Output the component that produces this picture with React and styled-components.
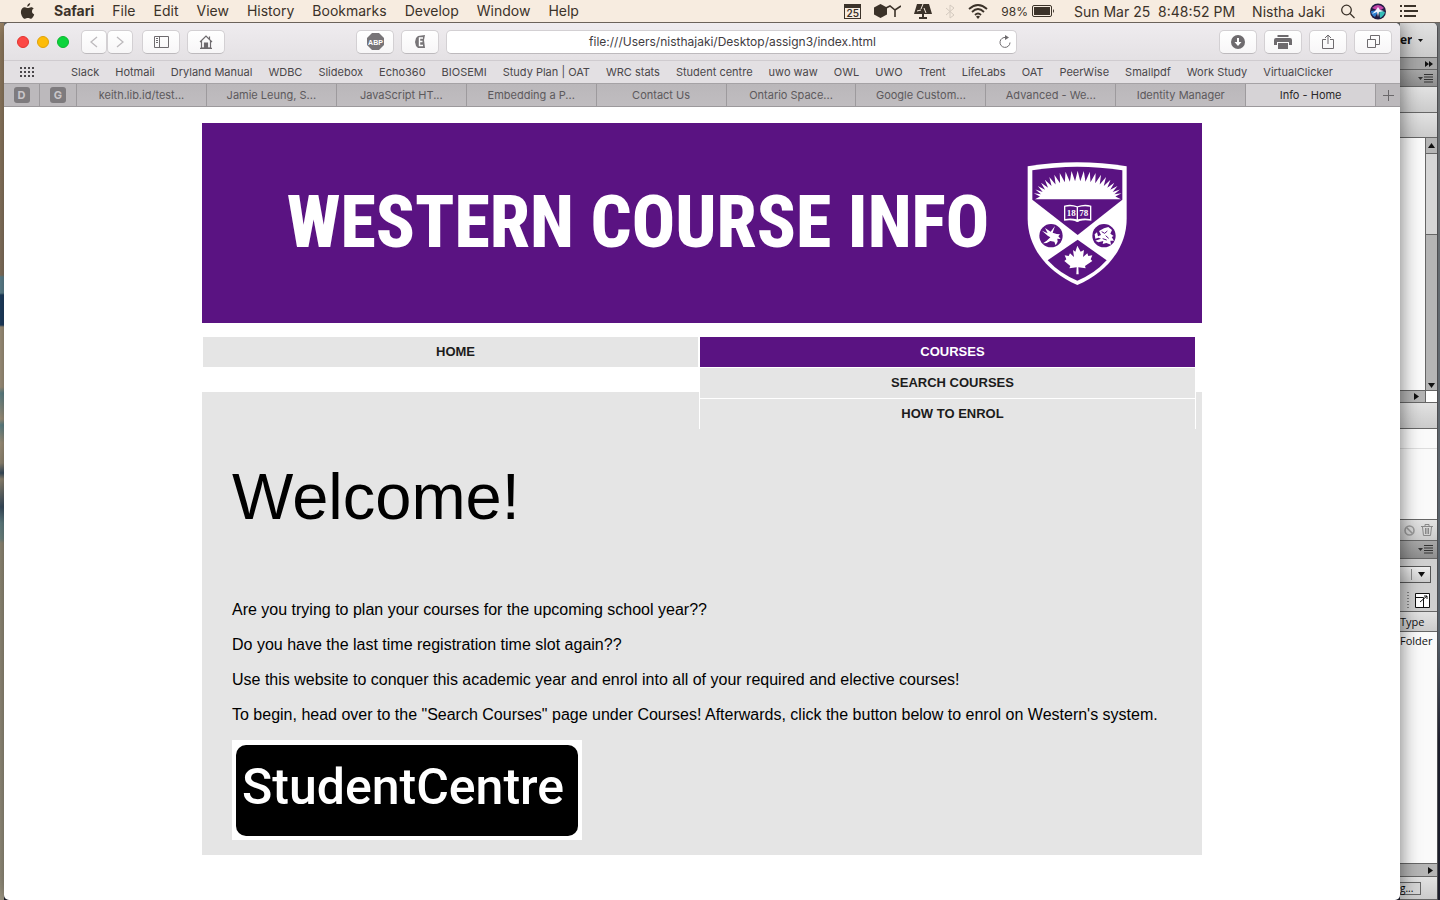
import React from 'react';
import styled, { createGlobalStyle } from 'styled-components';

const GlobalStyle = createGlobalStyle`
  * {
    box-sizing: border-box;
  }
  body {
    margin: 0;
    font-family: Inter, 'Liberation Sans', sans-serif;
  }
  ul, p, h1, h2 {
    margin: 0;
    padding: 0;
  }
  ul {
    list-style: none;
  }
  button {
    font-family: inherit;
    margin: 0;
    padding: 0;
  }
  svg {
    display: block;
    flex: none;
  }
`;

const Screen = styled.div`
  display: flex;
  flex-direction: column;
  min-height: 100vh;
  overflow: hidden;
`;

/* ---------- mac menu bar ---------- */

const MenuBar = styled.header`
  position: relative;
  z-index: 2;
  display: flex;
  align-items: center;
  justify-content: space-between;
  height: 23px;
  padding: 0 22px 0 20px;
  background: #f7ece0;
  border-bottom: 1px solid #6b625a;
  color: #3b3229;
  font-size: 14px;
  white-space: nowrap;
`;

const MenuGroup = styled.div`
  display: flex;
  align-items: center;
  gap: ${props => props.$gap}px;
`;

const MenuItem = styled.button`
  border: 0;
  background: none;
  color: inherit;
  font-size: 14px;
  line-height: 20px;
  font-weight: ${props => (props.$bold ? 700 : 400)};
`;

const CalendarIcon = styled.span`
  width: 17px;
  height: 15px;
  border: 1px solid #3b3229;
  border-top-width: 4px;
  font-size: 10px;
  font-weight: 600;
  line-height: 10px;
  text-align: center;
`;

const Battery = styled.span`
  display: flex;
  align-items: center;
  gap: 4px;
  font-size: 12px;
`;

const Clock = styled.span`
  padding: 0 4px 0 6px;
  white-space: pre;
`;

const UserName = styled.span`
  padding-right: 2px;
`;

/* ---------- desktop and windows ---------- */

const Desktop = styled.div`
  flex: 1;
  display: grid;
  grid-template-columns: 4px minmax(0, 1fr) 38px;
  padding-right: 2px;
  background: linear-gradient(#6f7274, #55606a 70%, #1c1d2b 82%);
`;

const Wallpaper = styled.div`
  background: linear-gradient(
    #a58c6c 0, #94806a 252px, #6a93a0 254px, #6a93a0 270px, #22466c 272px,
    #22466c 302px, #b5a68c 304px, #b5a68c 364px, #6b9499 370px, #b5a68c 396px,
    #6b9499 402px, #b5a68c 420px, #a49982 440px, #40566a 450px, #a49982 456px,
    #40566a 484px, #6d8f93 500px, #7d9792 516px, #a29a84 520px, #a69f8b 100%
  );
`;

const Browser = styled.main`
  position: relative;
  z-index: 1;
  display: flex;
  flex-direction: column;
  background: #fff;
  border-radius: 5px;
  overflow: hidden;
  box-shadow: 0 0 20px rgba(0, 0, 0, 0.55);
`;

const Toolbar = styled.div`
  display: flex;
  align-items: center;
  height: 38px;
  background: linear-gradient(#efecef, #e4e1e4);
  border-bottom: 1px solid #cfcbcf;
`;

const ToolbarLeft = styled.div`
  display: flex;
  align-items: center;
  width: 352px;
  padding-left: 13px;
`;

const ToolbarRight = styled.div`
  display: flex;
  justify-content: flex-end;
  gap: 7px;
  width: 383px;
  padding-right: 8px;
`;

const AddressArea = styled.div`
  flex: 1;
  display: flex;
  gap: 7px;
  min-width: 0;
`;

const Lights = styled.div`
  display: flex;
  gap: 8px;
  width: 64px;
`;

const Light = styled.button`
  width: 12px;
  height: 12px;
  border: 1px solid ${props => props.$edge};
  border-radius: 50%;
  background: ${props => props.$fill};
`;

const ToolButton = styled.button`
  display: flex;
  align-items: center;
  justify-content: center;
  width: ${props => (props.$narrow ? 26 : 38)}px;
  height: 24px;
  border: 1px solid #d3d0d3;
  border-bottom-color: #bdbabd;
  border-radius: 5px;
  background: linear-gradient(#fff, #f7f6f7);
  color: #6e6b6e;
`;

const ButtonSet = styled.div`
  display: flex;
  margin-right: ${props => props.$after}px;
`;

const AddressBar = styled.form`
  flex: 1;
  display: flex;
  align-items: center;
  min-width: 0;
  height: 24px;
  padding: 0 4px 0 20px;
  border: 1px solid #d3d0d3;
  border-bottom-color: #bdbabd;
  border-radius: 5px;
  background: #fff;
`;

const AddressInput = styled.input`
  flex: 1;
  min-width: 0;
  border: 0;
  padding: 0;
  background: none;
  color: #3f3c3f;
  font-family: Inter, sans-serif;
  font-size: 12px;
  text-align: center;
  outline: 0;
`;

const PlainButton = styled.button`
  display: flex;
  border: 0;
  background: none;
  color: #6e6b6e;
`;

const BookmarkBar = styled.nav`
  display: flex;
  align-items: center;
  gap: 16px;
  height: 22px;
  padding-left: 16px;
  background: #e3e0e3;
  font-size: 11px;
  white-space: nowrap;
`;

const GridButton = styled(PlainButton)`
  margin-right: 20px;
`;

const Bookmark = styled.a`
  color: #4a474a;
  text-decoration: none;
`;

const TabBar = styled.div`
  display: flex;
  height: 24px;
  background: #bcb9bc;
  border-top: 1px solid #a5a2a5;
  border-bottom: 1px solid #9c999c;
`;

const Tab = styled.button`
  flex: 1;
  border: 0;
  border-left: 1px solid #9d9a9d;
  background: ${props => (props.$active ? '#d6d3d6' : 'linear-gradient(#bab7ba, #c0bdc0)')};
  color: ${props => (props.$active ? '#2a282a' : '#5c595c')};
  font-size: 11px;
`;

const PinnedTab = styled.button`
  display: flex;
  align-items: center;
  justify-content: center;
  width: 36px;
  border: 0;
  border-right: ${props => (props.$last ? 0 : '1px solid #9d9a9d')};
  background: none;
`;

const PinLetter = styled.span`
  width: 16px;
  height: 16px;
  border-radius: 3px;
  background: #7e7b7e;
  color: #c9c6c9;
  font-size: 11px;
  font-weight: 700;
  line-height: 16px;
`;

const NewTab = styled.button`
  display: flex;
  align-items: center;
  justify-content: center;
  width: 25px;
  border: 0;
  border-left: 1px solid #9d9a9d;
  background: none;
  color: #6a676a;
`;

/* ---------- the web page ---------- */

const Page = styled.div`
  width: 100%;
  max-width: 1000px;
  margin: 0 auto;
  padding: 16px 0 45px;
  font-family: 'Liberation Sans', Arial, sans-serif;
`;

const Banner = styled.div`
  display: flex;
  align-items: center;
  justify-content: center;
  gap: 24px;
  height: 200px;
  padding-left: 26px;
  background: #5a1382;
`;

const BannerTitle = styled.h1`
  color: #fff;
  font-family: 'Roboto Condensed', 'Liberation Sans Narrow', 'Liberation Sans', sans-serif;
  font-size: 72px;
  font-weight: 800;
  line-height: 80px;
  white-space: nowrap;
`;

const SiteNav = styled.ul`
  display: grid;
  grid-template-columns: 1fr 1fr;
  padding: 13px 6px 24px 0;
`;

const NavItem = styled.li`
  position: relative;
`;

const NavLink = styled.a`
  display: block;
  padding-left: 10px;
  border: 1px solid #fff;
  border-bottom-width: ${props => (props.$sub ? 0 : 1)}px;
  background: ${props => (props.$active ? '#5a1382' : '#e5e5e5')};
  color: ${props => (props.$active ? '#fff' : '#1c1c1c')};
  font-size: 13px;
  font-weight: 700;
  line-height: 30px;
  text-align: center;
  text-decoration: none;
  text-transform: uppercase;
`;

const SubMenu = styled.ul`
  position: absolute;
  top: 31px;
  left: 0;
  right: 0;
`;

const Content = styled.section`
  padding: 68px 30px 15px;
  background: #e5e5e5;
  color: #000;
`;

const Heading = styled.h2`
  margin-bottom: 66px;
  font-size: 65px;
  font-weight: 400;
  line-height: 74px;
`;

const Copy = styled.div`
  display: grid;
  gap: 15px;
  justify-items: start;
  font-size: 16px;
  line-height: 20px;
`;

const StudentCentre = styled.a`
  display: block;
  width: 350px;
  padding: 5px 4px 4px;
  background: #fff;
  text-decoration: none;
`;

const StudentCentreLabel = styled.span`
  display: block;
  height: 91px;
  padding-left: 6px;
  border-radius: 10px;
  background: #000;
  color: #fff;
  font-family: Roboto, sans-serif;
  font-size: 50px;
  font-weight: 500;
  line-height: 84px;
`;

/* ---------- window behind the browser ---------- */

const SidePanel = styled.aside`
  display: flex;
  flex-direction: column;
  overflow: hidden;
  border-right: 1px solid #4d4d50;
  border-top-right-radius: 5px;
  background: #cfcfcf;
  color: #222;
  font-family: 'Open Sans', sans-serif;
  font-size: 11px;
`;

const PanelRow = styled.div`
  display: flex;
  align-items: center;
  justify-content: ${props => props.$align || 'flex-end'};
  gap: 6px;
  height: ${props => props.$h}px;
  padding-right: ${props => props.$pad || 0}px;
  border-bottom: 1px solid ${props => (props.$open ? 'transparent' : '#666')};
  background: ${props => props.$bg || 'linear-gradient(#e2e2e2, #cbcbcb)'};
`;

const PanelList = styled.div`
  display: flex;
  justify-content: flex-end;
  ${props => (props.$h ? `height: ${props.$h}px;` : 'flex: 1;')}
  border-bottom: 1px solid #666;
  background: #fafafa;
`;

const PanelLine = styled.div`
  width: 100%;
  height: 20px;
  border-bottom: 1px solid #ddd;
`;

const ScrollTrack = styled.div`
  display: flex;
  flex-direction: column;
  justify-content: space-between;
  width: 12px;
  padding-bottom: 2px;
  border-left: 1px solid #666;
  background: #b5b5b5;
`;

const ScrollThumb = styled.div`
  height: 97px;
  padding-top: 5px;
  border-bottom: 1px solid #666;
  background: linear-gradient(#b5b5b5 15px, #666 15px, #666 16px, #d6d6d6 16px);
`;

const ScrollCorner = styled.span`
  align-self: stretch;
  width: 12px;
  border-left: 1px solid #666;
  background: #fff;
`;

const PanelText = styled.span`
  flex: 1;
  overflow: hidden;
  color: #111;
  white-space: nowrap;
  font-size: ${props => props.$size || 11}px;
  font-weight: ${props => (props.$bold ? 700 : 400)};
  line-height: 18px;
`;

const PanelSelect = styled.button`
  display: flex;
  align-items: center;
  justify-content: flex-end;
  gap: 5px;
  width: 32px;
  height: 17px;
  padding-right: 5px;
  border: 1px solid #555;
  border-left: 0;
  background: linear-gradient(#eee, #ccc);
`;

const PanelButton = styled.button`
  width: 21px;
  height: 13px;
  border: 1px solid #666;
  border-left: 0;
  background: #d5d5d5;
  font-size: 10px;
  line-height: 9px;
  text-align: left;
`;

const bookmarks = [
  'Slack', 'Hotmail', 'Dryland Manual', 'WDBC', 'Slidebox', 'Echo360', 'BIOSEMI',
  'Study Plan | OAT', 'WRC stats', 'Student centre', 'uwo waw', 'OWL', 'UWO', 'Trent',
  'LifeLabs', 'OAT', 'PeerWise', 'Smallpdf', 'Work Study', 'VirtualClicker'
];

const tabs = [
  'keith.lib.id/test...', 'Jamie Leung, S...', 'JavaScript HT...', 'Embedding a P...',
  'Contact Us', 'Ontario Space...', 'Google Custom...', 'Advanced - We...',
  'Identity Manager', 'Info - Home'
];

const menus = ['File', 'Edit', 'View', 'History', 'Bookmarks', 'Develop', 'Window', 'Help'];

// zig-zag between an outer and an inner ellipse, closed along the horizon
function sunburst() {
  var points = [];
  var rays = 21;
  for (var i = 0; i <= rays * 2; i++) {
    var angle = Math.PI * (0.04 + 0.92 * (i / (rays * 2)));
    var tip = i % 2 === 1;
    var x = 194 - Math.cos(angle) * (tip ? 134 : 114);
    var y = 143 - Math.sin(angle) * (tip ? 84 : 52);
    points.push(x.toFixed(1) + ',' + y.toFixed(1));
  }
  return 'M66,145 L' + points.join(' L') + ' L324,145 Z';
}

const Shield = () => (
  <svg width="130" height="145" viewBox="0 0 390 435" aria-label="Western crest">
    <path fill="#fff" d="M44 46Q192 22 341 46V203C341 290 282 364 193 402C104 364 44 290 44 203Z" />
    <path fill="#5a1382" d="M58 58Q192 36 328 58V146L194 252L58 146Z" />
    <path fill="#fff" d={sunburst()} />
    <path fill="#5a1382" d="M194 266L281 328Q244 369 193 389Q142 369 104 328Z" />
    <path fill="#fff" d="M153 164Q175 158 193 166Q213 158 235 164V209Q213 206 200 210Q193 216 186 210Q173 206 153 209Z" />
    <path fill="#5a1382" d="M157 167Q176 163 191 169V205Q174 201 157 204ZM195 169Q213 163 231 167V204Q213 201 195 205Z" />
    <g fill="#fff" fontFamily="Liberation Serif, serif" fontWeight="700" fontSize="27">
      <text x="161" y="194">18</text>
      <text x="199" y="194">78</text>
    </g>
    <circle cx="114" cy="254" r="35" fill="#5a1382" />
    <circle cx="273" cy="254" r="35" fill="#5a1382" />
    <path fill="#fff" d="M87 239L104 247L96 231L113 242L126 225L119 245L131 249L141 250L136 256L143 264L133 263L134 272L128 283L124 272L112 270L101 276L90 277L101 269L112 259L104 254Z" />
    <path fill="#fff" d="M245 250L252 244L255 256L264 252L258 240L273 232L286 228L297 237L292 248L302 255L296 258L303 269L292 269L294 281L280 276L269 279L271 270L256 274L247 269L264 263L257 260L247 263Z" />
    <path fill="none" stroke="#5a1382" strokeWidth="3" d="M266 242L275 247L283 240M278 254L287 262M269 263L281 267" />
    <path fill="#fff" d="M193 284L203 302L213 297L210 318L223 307L226 315L238 313L233 325L238 330L216 345L218 352L196 349L197 370H190L191 349L169 352L172 345L154 330L160 325L155 313L167 315L171 307L183 318L180 297L187 302Z" />
  </svg>
);

const Tri = ({ d, w = 8, h = 8 }) => (
  <svg width={w} height={h} viewBox={'0 0 ' + w + ' ' + h} fill="#111"><path d={d} /></svg>
);

const PanelMenuIcon = () => (
  <svg width="15" height="9" viewBox="0 0 15 9" fill="#333">
    <path d="M0 3h5L2.500 6zM6 0h9v1H6zM6 2.500h9v1H6zM6 5h9v1H6zM6 7.500h9v1H6z" />
  </svg>
);

class App extends React.Component {
  constructor(props) {
    super(props)

    this.state = {
      url: 'file:///Users/nisthajaki/Desktop/assign3/index.html',
      activeTab: 9
    }
  }

  onUrlChange(e) {
    this.setState({
      url: e.target.value
    })
  }

  selectTab(index) {
    this.setState({
      activeTab: index
    })
  }

  renderMenuBar() {
    return (
      <MenuBar>
        <MenuGroup $gap={18}>
          <svg width="16" height="17" viewBox="0 0 16 17" fill="#3b3229">
            <path d="M10.200 0C10.300 1.800 8.800 3.700 7.200 3.700C7 2 8.600.3 10.200 0ZM13.700 5.600C11.300 7 11.500 10.300 14.200 11.500C13.600 13.300 12.200 15.800 10.700 15.800C9.500 15.800 9.200 15.100 7.900 15.100C6.500 15.100 6.100 15.800 5 15.800C3 15.800.9 12 .9 9C.9 6 2.800 4.300 4.800 4.300C6.100 4.300 7 5.100 7.900 5.100C8.700 5.100 9.700 4.200 11.200 4.200C12.200 4.200 13.200 4.800 13.700 5.600Z" />
          </svg>
          <MenuItem $bold>Safari</MenuItem>
          {menus.map(name => <MenuItem key={name}>{name}</MenuItem>)}
        </MenuGroup>
        <MenuGroup $gap={13}>
          <CalendarIcon>25</CalendarIcon>
          <svg width="27" height="14" viewBox="0 0 27 14">
            <path fill="#3b3229" d="M6.500 0L13 3.500V10.500L6.500 14L0 10.500V3.500Z" />
            <path fill="none" stroke="#3b3229" strokeWidth="1.600" d="M12 4L16 2L21 6L27 2M21 6V13" />
          </svg>
          <svg width="18" height="15" viewBox="0 0 18 15" fill="#3b3229">
            <path d="M3 0H15L18 10H10V13H13V15H5V13H8V10H0Z" />
            <path fill="none" stroke="#f7ece0" d="M9 0L7 5M10 4L12 9M3 7L7 6" />
          </svg>
          <svg width="10" height="15" viewBox="0 0 10 15" fill="none" stroke="#d4cabf">
            <path d="M1 4L9 11L5 14V1L9 4L1 11" />
          </svg>
          <svg width="20" height="15" viewBox="0 0 20 15" fill="none" stroke="#3b3229" strokeWidth="1.800">
            <path d="M1 5Q10-3 19 5M4 8Q10 2 16 8M7 11Q10 8 13 11" />
            <path fill="#3b3229" stroke="none" d="M8 12.500Q10 11 12 12.500L10 15Z" />
          </svg>
          <Battery>
            98%
            <svg width="23" height="12" viewBox="0 0 23 12" fill="#3b3229">
              <rect x=".5" y=".5" width="19" height="11" rx="1.500" fill="none" stroke="#3b3229" />
              <path d="M2 2H18V10H2ZM21 4Q23 6 21 8Z" />
            </svg>
          </Battery>
          <Clock>Sun Mar 25  8:48:52 PM</Clock>
          <UserName>Nistha Jaki</UserName>
          <svg width="16" height="15" viewBox="0 0 16 15" fill="none" stroke="#3b3229" strokeWidth="1.300">
            <circle cx="6.500" cy="6" r="4.800" />
            <path d="M10 9.500L14.500 14" />
          </svg>
          <svg width="18" height="17" viewBox="0 0 18 17">
            <circle cx="9" cy="8.500" r="8" fill="#211b42" />
            <path d="M3 5Q9-1 15 5L10 8Z" fill="#c445a8" />
            <path d="M2 8L10 7L6 14Q2 12 2 8Z" fill="#2f7fd0" />
            <path d="M10 7L16 9Q15 13 11 15Z" fill="#35bdb9" />
            <path d="M9 4L11 7L15 8L10 9L9 14L8 9L3 11L7 7Z" fill="#f2f4ff" />
          </svg>
          <svg width="18" height="12" viewBox="0 0 18 12" fill="#3b3229">
            <path d="M0 0h2v2H0zM4 0h12v2H4zM0 5h2v2H0zM4 5h14v2H4zM0 10h2v2H0zM4 10h12v2H4z" />
          </svg>
        </MenuGroup>
      </MenuBar>
    );
  }

  renderToolbar() {
    return (
      <Toolbar>
        <ToolbarLeft>
          <Lights>
            <Light aria-label="Close" $fill="#fc4845" $edge="#e2332f" />
            <Light aria-label="Minimise" $fill="#fdbc09" $edge="#e0a209" />
            <Light aria-label="Zoom" $fill="#0bd43b" $edge="#0cb52f" />
          </Lights>
          <ButtonSet $after={9}>
            <ToolButton $narrow aria-label="Back">
              <svg width="8" height="12" viewBox="0 0 8 12" fill="none" stroke="#bdbabd" strokeWidth="1.300"><path d="M7 1L1 6L7 11" /></svg>
            </ToolButton>
            <ToolButton $narrow aria-label="Forward">
              <svg width="8" height="12" viewBox="0 0 8 12" fill="none" stroke="#bdbabd" strokeWidth="1.300"><path d="M1 1L7 6L1 11" /></svg>
            </ToolButton>
          </ButtonSet>
          <ButtonSet $after={7}>
            <ToolButton aria-label="Sidebar">
              <svg width="15" height="12" viewBox="0 0 15 12" fill="none" stroke="currentColor">
                <path d="M.5.5H14.500V11.500H.5ZM5.500.5V11.500M2 2.500H4M2 4.500H4M2 6.500H4" />
              </svg>
            </ToolButton>
          </ButtonSet>
          <ToolButton aria-label="Home">
            <svg width="14" height="14" viewBox="0 0 14 14" fill="none" stroke="currentColor" strokeWidth="1.200">
              <path d="M1 7L7 1L13 7M2.500 6V13H11.500V6M10.500 4V1.500" />
              <path d="M5.500 8H8.500V13H5.500Z" fill="currentColor" />
              <path d="M1 13.300H13" />
            </svg>
          </ToolButton>
        </ToolbarLeft>
        <AddressArea>
          <ToolButton aria-label="Adblock Plus">
            <svg width="17" height="17" viewBox="0 0 17 17">
              <path fill="#777477" d="M5 0H12L17 5V12L12 17H5L0 12V5Z" />
              <text x="8.500" y="11.500" fill="#fff" fontSize="7" fontWeight="700" fontFamily="Liberation Sans" textAnchor="middle">ABP</text>
            </svg>
          </ToolButton>
          <ToolButton aria-label="Extension">
            <svg width="12" height="14" viewBox="0 0 12 14">
              <path fill="#777477" d="M4 1L11 0L10 5L11 13L4 13L2 11L1 7L2 3Z" />
              <path fill="none" stroke="#fff" strokeWidth="1.400" d="M9 3H5.500V10.500H9M5.500 6.500H8.500" />
            </svg>
          </ToolButton>
          <AddressBar onSubmit={e => e.preventDefault()}>
            <AddressInput aria-label="Address" value={this.state.url} onChange={this.onUrlChange.bind(this)} />
            <PlainButton type="button" aria-label="Reload">
              <svg width="14" height="14" viewBox="0 0 14 14" fill="none" stroke="currentColor">
                <path d="M8 2.500A5 5 0 1 0 12 7.500" />
                <path d="M7 0L11 2.500L7 5Z" fill="currentColor" stroke="none" />
              </svg>
            </PlainButton>
          </AddressBar>
        </AddressArea>
        <ToolbarRight>
          <ToolButton aria-label="Downloads">
            <svg width="14" height="14" viewBox="0 0 14 14">
              <circle cx="7" cy="7" r="7" fill="currentColor" />
              <path fill="#fff" d="M6 3H8V7H10.500L7 11L3.500 7H6Z" />
            </svg>
          </ToolButton>
          <ToolButton aria-label="Print">
            <svg width="18" height="14" viewBox="0 0 18 14" fill="currentColor">
              <path d="M3.500 0H14.500V2H3.500ZM2 3H16Q18 3 18 5V10H15V7H3V10H0V5Q0 3 2 3ZM4 8H14V14H4Z" />
            </svg>
          </ToolButton>
          <ToolButton aria-label="Share">
            <svg width="12" height="16" viewBox="0 0 12 16" fill="none" stroke="currentColor">
              <path d="M4 5.500H.5V14.500H11.500V5.500H8M6 10V1M3 4L6 1L9 4" />
            </svg>
          </ToolButton>
          <ToolButton aria-label="Show all tabs">
            <svg width="13" height="13" viewBox="0 0 13 13" fill="none" stroke="currentColor">
              <path d="M.5 4.500H8.500V12.500H.5ZM3.500 4.500V.5H12.500V9.500H8.500" />
            </svg>
          </ToolButton>
        </ToolbarRight>
      </Toolbar>
    );
  }

  renderTabs() {
    return (
      <TabBar>
        <PinnedTab><PinLetter>D</PinLetter></PinnedTab>
        <PinnedTab $last><PinLetter>G</PinLetter></PinnedTab>
        {tabs.map((title, i) => (
          <Tab key={title} $active={i === this.state.activeTab} onClick={() => this.selectTab(i)}>
            {title}
          </Tab>
        ))}
        <NewTab aria-label="New tab">
          <svg width="11" height="11" viewBox="0 0 11 11" stroke="currentColor"><path d="M5.500 0V11M0 5.500H11" /></svg>
        </NewTab>
      </TabBar>
    );
  }

  renderPage() {
    return (
      <Page>
        <Banner>
          <BannerTitle>WESTERN COURSE INFO</BannerTitle>
          <Shield />
        </Banner>
        <SiteNav>
          <NavItem><NavLink href="#home">Home</NavLink></NavItem>
          <NavItem>
            <NavLink href="#courses" $active>Courses</NavLink>
            <SubMenu>
              <li><NavLink href="#search" $sub>Search Courses</NavLink></li>
              <li><NavLink href="#enrol" $sub>How to Enrol</NavLink></li>
            </SubMenu>
          </NavItem>
        </SiteNav>
        <Content>
          <Heading>Welcome!</Heading>
          <Copy>
            <p>Are you trying to plan your courses for the upcoming school year??</p>
            <p>Do you have the last time registration time slot again??</p>
            <p>Use this website to conquer this academic year and enrol into all of your required and elective courses!</p>
            <p>To begin, head over to the "Search Courses" page under Courses! Afterwards, click the button below to enrol on Western's system.</p>
            <StudentCentre href="#student-centre">
              <StudentCentreLabel>StudentCentre</StudentCentreLabel>
            </StudentCentre>
          </Copy>
        </Content>
      </Page>
    );
  }

  renderSidePanel() {
    return (
      <SidePanel>
        <PanelRow $h={35} $pad={14}>
          <PanelText $size={12} $bold>er</PanelText>
          <Tri w={5} h={3} d="M0 0H5L2.500 3Z" />
        </PanelRow>
        <PanelRow $h={12} $pad={4} $bg="#a6a6a6">
          <Tri w={8} h={6} d="M0 0L4 3L0 6ZM4 0L8 3L4 6Z" />
        </PanelRow>
        <PanelRow $h={17} $pad={4} $bg="linear-gradient(#a8a8a8, #8e8e8e)"><PanelMenuIcon /></PanelRow>
        <PanelRow $h={26} />
        <PanelRow $h={25} />
        <PanelList $h={253}>
          <ScrollTrack>
            <ScrollThumb><Tri w={11} h={5} d="M2 5L5.500 0L9 5Z" /></ScrollThumb>
            <Tri w={11} h={5} d="M2 0L5.500 5L9 0Z" />
          </ScrollTrack>
        </PanelList>
        <PanelRow $h={12} $bg="#b5b5b5">
          <Tri w={5} h={7} d="M0 0L5 3.500L0 7Z" />
          <ScrollCorner />
        </PanelRow>
        <PanelRow $h={26} />
        <PanelList $h={91}><PanelLine /></PanelList>
        <PanelRow $h={21} $pad={4}>
          <svg width="11" height="11" viewBox="0 0 11 11" fill="none" stroke="#999" strokeWidth="1.600"><circle cx="5.500" cy="5.500" r="4.500" /><path d="M2.500 2.500L8.500 8.500" /></svg>
          <svg width="12" height="12" viewBox="0 0 12 12" fill="none" stroke="#888"><path d="M0 2.500H12M4 2V.5H8V2M1.500 3L2.500 11.500H9.500L10.500 3M4.500 4V10M6 4V10M7.500 4V10" /></svg>
        </PanelRow>
        <PanelRow $h={18} $pad={4} $bg="linear-gradient(#a8a8a8, #8e8e8e)"><PanelMenuIcon /></PanelRow>
        <PanelRow $h={31} $pad={6} $bg="#cfcfcf" $open>
          <PanelSelect aria-label="Site">
            <svg width="2" height="11" viewBox="0 0 2 11" fill="#888"><path d="M0 0H1V11H0Z" /></svg>
            <Tri w={7} h={5} d="M0 0H7L3.500 5Z" />
          </PanelSelect>
        </PanelRow>
        <PanelRow $h={22} $pad={7} $bg="#cfcfcf">
          <svg width="2" height="18" viewBox="0 0 2 18" stroke="#333" strokeDasharray="1 2"><path d="M1 0V18" /></svg>
          <svg width="15" height="15" viewBox="0 0 15 15" fill="#fff" stroke="#111"><path d="M.5.5H14.500V14.500H.5ZM.5 4.500H8.500V14.500M5 9L12 3M9 3H12V6" /></svg>
        </PanelRow>
        <PanelRow $h={20}><PanelText>Type</PanelText></PanelRow>
        <PanelList>
          <PanelText>Folder</PanelText>
        </PanelList>
        <PanelRow $h={13} $pad={4} $bg="#b5b5b5"><Tri w={5} h={7} d="M0 0L5 3.500L0 7Z" /></PanelRow>
        <PanelRow $h={23} $align="flex-start"><PanelButton>g...</PanelButton></PanelRow>
      </SidePanel>
    );
  }

  render() {
    return (
      <Screen>
        <GlobalStyle />
        {this.renderMenuBar()}
        <Desktop>
          <Wallpaper />
          <Browser>
            {this.renderToolbar()}
            <BookmarkBar>
              <GridButton aria-label="Bookmarks">
                <svg width="15" height="11" viewBox="0 0 15 11" fill="#4a474a">
                  {[0, 4, 8].map(y => [0, 4, 8, 12].map(x => <rect key={x + '-' + y} x={x} y={y} width="2" height="2" />))}
                </svg>
              </GridButton>
              {bookmarks.map(name => <Bookmark key={name} href="#bookmark">{name}</Bookmark>)}
            </BookmarkBar>
            {this.renderTabs()}
            {this.renderPage()}
          </Browser>
          {this.renderSidePanel()}
        </Desktop>
      </Screen>
    );
  }
}

export default App;
